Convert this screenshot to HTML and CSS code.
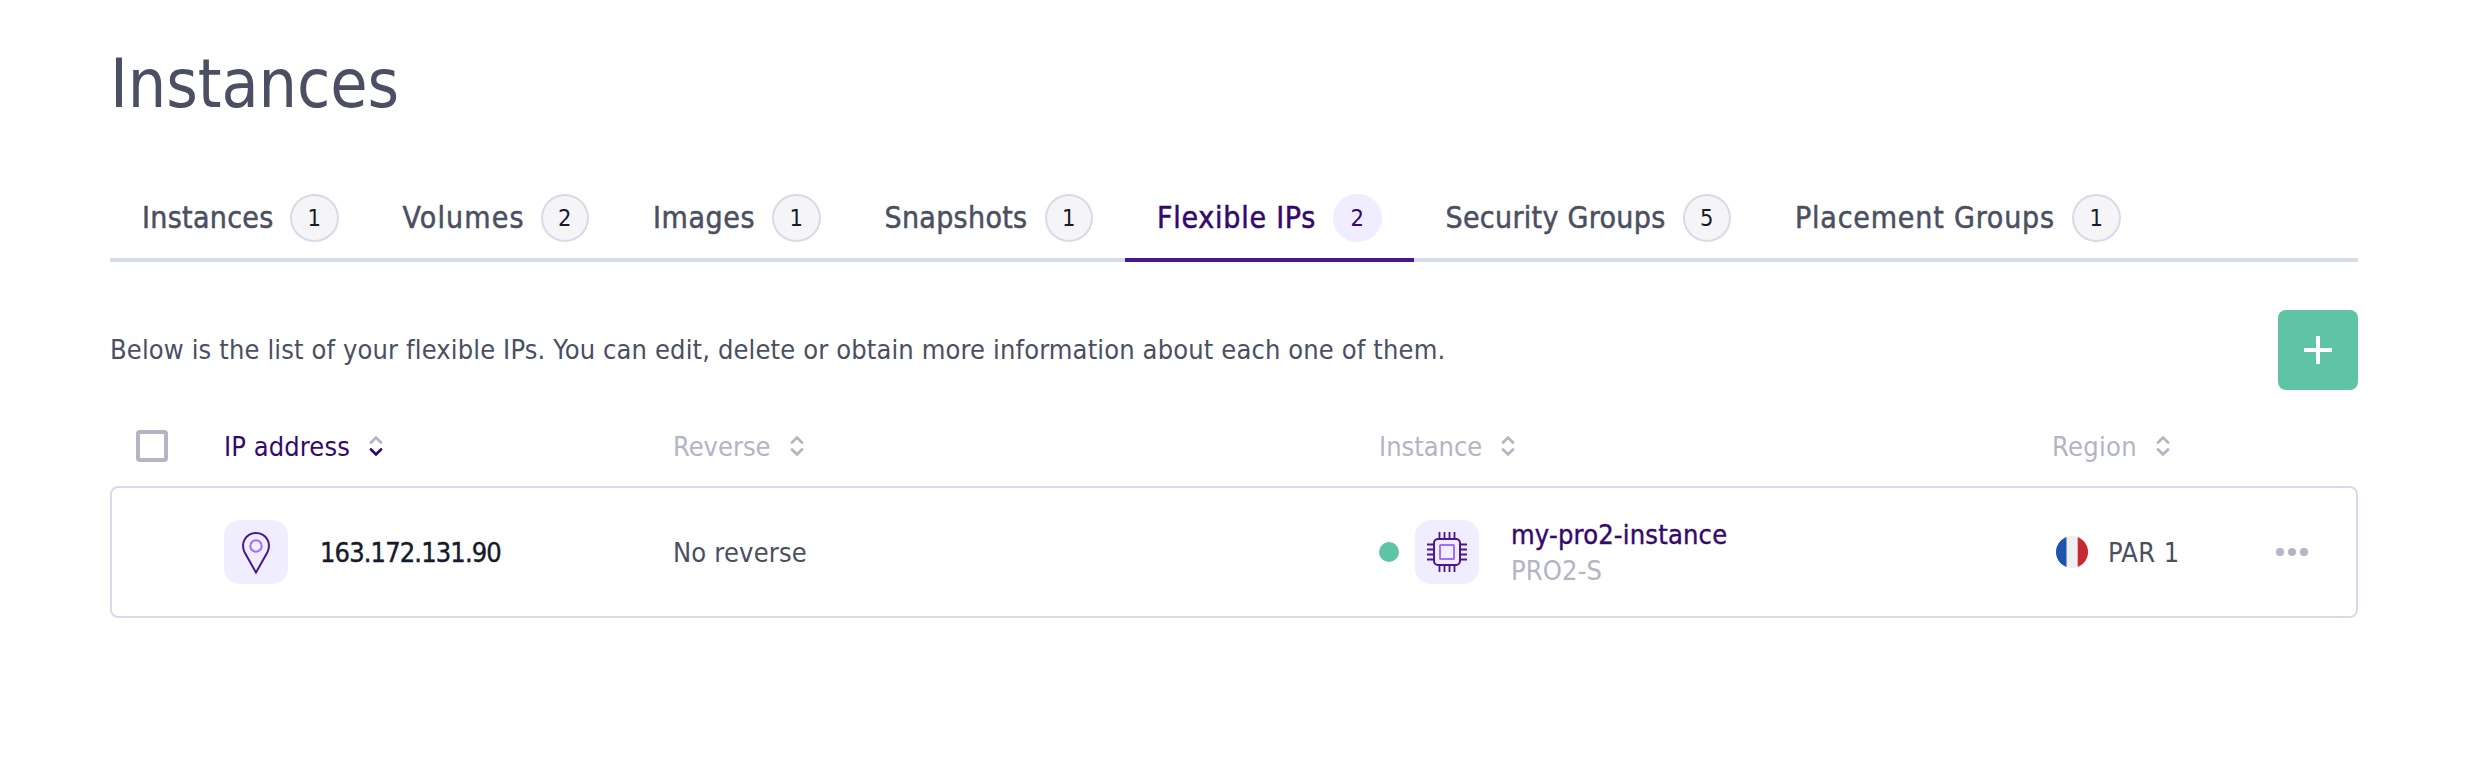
FILE: index.html
```html
<!DOCTYPE html>
<html lang="en">
<head>
<meta charset="utf-8">
<title>Instances</title>
<link rel="stylesheet" href="styles.css">
</head>
<body>
<svg class="defs" width="0" height="0">
  <symbol id="sort" viewBox="0 0 16 24">
    <path d="M3 8.5 8 3.6l5 4.900"/>
    <path d="M3 15.500 8 20.400l5-4.900"/>
  </symbol>
</svg>
<main class="page">
  <h1 class="title">Instances</h1>

  <nav class="tabs">
    <a class="tab t-instances"><span class="label">Instances</span><span class="badge">1</span></a>
    <a class="tab t-volumes"><span class="label">Volumes</span><span class="badge">2</span></a>
    <a class="tab t-images"><span class="label">Images</span><span class="badge">1</span></a>
    <a class="tab t-snapshots"><span class="label">Snapshots</span><span class="badge">1</span></a>
    <a class="tab t-ips active"><span class="label">Flexible IPs</span><span class="badge">2</span></a>
    <a class="tab t-security"><span class="label">Security Groups</span><span class="badge">5</span></a>
    <a class="tab t-placement"><span class="label">Placement Groups</span><span class="badge">1</span></a>
  </nav>

  <div class="intro">
    <p class="description">Below is the list of your flexible IPs. You can edit, delete or obtain more information about each one of them.</p>
    <button class="add" aria-label="Add"><svg width="28" height="28" viewBox="0 0 28 28"><path d="M14 0v28M0 14h28"/></svg></button>
  </div>

  <div class="row head">
    <div class="check"><span class="checkbox"></span></div>
    <div class="th sorted"><span>IP address</span><svg class="sort" viewBox="0 0 16 24"><path d="M3 8.5 8 3.6l5 4.900"/><path class="down" d="M3 15.500 8 20.400l5-4.900"/></svg></div>
    <div class="th"><span>Reverse</span><svg class="sort"><use href="#sort"/></svg></div>
    <div class="th"><span>Instance</span><svg class="sort"><use href="#sort"/></svg></div>
    <div class="th region-th"><span>Region</span><svg class="sort"><use href="#sort"/></svg></div>
  </div>

  <div class="row item">
    <div></div>
    <div class="cell ip-cell">
      <span class="tile"><svg width="64" height="64" viewBox="0 0 64 64"><path class="dark" d="M32 52.500 20.600 32.200C16.200 23 22 12.900 32 12.900s15.800 10.100 11.400 19.300Z"/><circle class="light" cx="32" cy="26" r="5.700"/></svg></span>
      <span class="ip">163.172.131.90</span>
    </div>
    <div class="cell reverse">No reverse</div>
    <div class="cell instance-cell">
      <span class="status"></span>
      <span class="tile"><svg width="64" height="64" viewBox="0 0 64 64"><rect class="dark" x="19" y="19" width="26" height="26" rx="4"/><path class="pins" d="M24.500 12v7m5-7v7m5-7v7m5-7v7M24.500 45v7m5-7v7m5-7v7m5-7v7M12 24.500h7m-7 5h7m-7 5h7m-7 5h7M45 24.500h7m-7 5h7m-7 5h7m-7 5h7"/><rect class="light" x="25" y="25" width="14" height="14" rx="0.500"/></svg></span>
      <span class="names"><span class="name">my-pro2-instance</span><span class="type">PRO2-S</span></span>
    </div>
    <div class="cell region-cell">
      <svg class="flag" width="32" height="32" viewBox="0 0 32 32"><clipPath id="round"><circle cx="16" cy="16" r="16"/></clipPath><g clip-path="url(#round)"><path fill="#efefef" d="M0 0h32v32H0z"/><path fill="#1d54ae" d="M0 0h10.500v32H0z"/><path fill="#c52a32" d="M21.700 0H32v32H21.700z"/></g></svg>
      <span class="region">PAR 1</span>
    </div>
    <div class="cell more"><i></i><i></i><i></i></div>
  </div>
</main>
</body>
</html>
```
FILE: styles.css
```css
* { box-sizing: border-box; }
body {
  margin: 0;
  background: #fff;
  color: #4a4f62;
  font: 27px/36px "DejaVu Sans Condensed", "DejaVu Sans", sans-serif;
}
.defs { display: block; }
.page { padding: 44px 116px 0 110px; }
.title {
  margin: 0;
  font-size: 67.5px;
  font-weight: 400;
  line-height: 80px;
  letter-spacing: -.1px;
}
.tabs {
  display: flex;
  height: 92px;
  margin-top: 46px;
  border-bottom: 4px solid #d7dae8;
}
.tab {
  display: flex;
  align-items: center;
  gap: 16px;
  height: 92px;
  padding: 4px 32px 0;
  font-size: 30px;
  white-space: nowrap;
}
.label { -webkit-text-stroke: .5px currentColor; }
.t-instances .label { width: 132px; letter-spacing: .3px; }
.t-volumes .label { width: 122px; letter-spacing: 1.15px; }
.t-images .label { width: 103px; letter-spacing: .6px; }
.t-snapshots .label { width: 144px; letter-spacing: .3px; }
.t-ips .label { width: 160px; letter-spacing: .75px; }
.t-security .label { width: 221px; letter-spacing: .3px; }
.t-placement .label { width: 261px; letter-spacing: .8px; }
.active { color: #34086d; border-bottom: 4px solid #4a1793; padding-top: 8px; }
.badge {
  display: flex;
  align-items: center;
  justify-content: center;
  width: 48.5px;
  height: 48px;
  border: 2px solid #d7dae8;
  border-radius: 50%;
  background: #f5f5f8;
  color: #151a2d;
  font-size: 23.5px;
}
.active .badge { border-color: #efedff; background: #efedff; color: #34086d; }
.intro {
  display: flex;
  align-items: center;
  justify-content: space-between;
  margin-top: 48px;
}
.description { margin: 0; letter-spacing: .145px; }
.add {
  display: flex;
  align-items: center;
  justify-content: center;
  width: 80px;
  height: 80px;
  padding: 0;
  border: 0;
  border-radius: 8px;
  background: #5fc4a5;
}
.add path { stroke: #fff; stroke-width: 4; }
.row {
  display: grid;
  grid-template-columns: 114px 449px 706px 673px 224px 1fr;
  align-items: center;
}
.head { height: 96px; padding-top: 16px; }
.check { padding-left: 26px; }
.checkbox {
  display: block;
  width: 32px;
  height: 32px;
  border: 4px solid #b2b5c3;
  border-radius: 4px;
}
.th { display: flex; align-items: center; gap: 18px; color: #b2b5c3; }
.th span { padding-top: 1px; }
.sorted { color: #34086d; letter-spacing: .1px; }
.region-th { letter-spacing: .3px; }
.sort { width: 16px; height: 24px; }
.sort path, #sort path {
  fill: none;
  stroke: #b2b5c3;
  stroke-width: 2.8;
  stroke-linecap: round;
}
.sort .down { stroke: #34086d; }
.item {
  height: 132px;
  border: 2px solid #d7dae8;
  border-radius: 8px;
  grid-template-columns: 112px 449px 705px 674px 224px 1fr;
}
.cell { display: flex; align-items: center; }
.tile {
  width: 64px;
  height: 64px;
  border-radius: 16px;
  background: #efedff;
}
.tile svg { display: block; }
.dark { fill: none; stroke: #4a1793; stroke-width: 2; }
.pins { fill: none; stroke: #4a1793; stroke-width: 1.8; }
.light { fill: none; stroke: #a070f2; stroke-width: 2; }
.ip-cell { gap: 32px; }
.ip {
  padding-top: 1px;
  color: #151a2d;
  letter-spacing: -.87px;
  -webkit-text-stroke: .4px currentColor;
}
.reverse { padding-top: 1px; letter-spacing: .2px; }
.status {
  width: 20px;
  height: 20px;
  margin: 0 16px 0 1px;
  border-radius: 50%;
  background: #5fc4a5;
}
.names { display: flex; flex-direction: column; margin-left: 32px; padding-top: 1px; }
.name {
  color: #34086d;
  letter-spacing: .2px;
  -webkit-text-stroke: .4px currentColor;
}
.type { color: #b2b5c3; letter-spacing: .15px; }
.region-cell { gap: 20px; padding-left: 4px; }
.region { padding-top: 1px; letter-spacing: .4px; }
.more { gap: 4px; }
.more i { width: 8px; height: 8px; border-radius: 50%; background: #b2b5c3; }
```
